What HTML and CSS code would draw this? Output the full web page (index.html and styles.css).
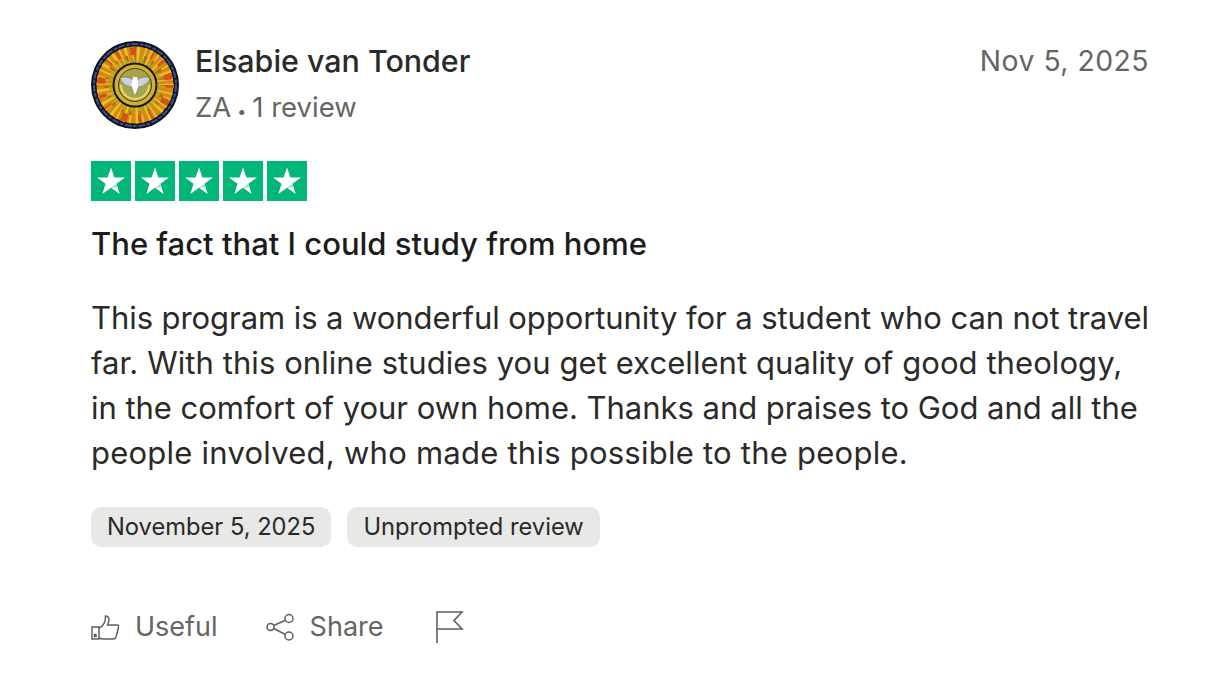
FILE: index.html
```html
<!DOCTYPE html>
<html lang="en">
<head>
<meta charset="utf-8">
<title>Review</title>
<link rel="stylesheet" href="styles.css">
</head>
<body>
<article class="review">
  <header class="head">
    <div class="who">
      <svg class="avatar" viewBox="0 0 88 88" aria-hidden="true">
        <circle cx="44" cy="44" r="44" fill="#10101c"/>
        <circle cx="44" cy="44" r="41" fill="none" stroke="#34508f" stroke-width="2.200" stroke-dasharray="7 1.500 4 1"/>
        <circle cx="44" cy="44" r="39.500" fill="#1c1410"/>
        <circle cx="44" cy="44" r="38.500" fill="#d28c12"/>
        <circle cx="44" cy="44" r="30" fill="none" stroke="#efbd24" stroke-width="17" stroke-dasharray="2.500 4 1.500 3"/>
        <circle cx="44" cy="44" r="34" fill="none" stroke="#d2521a" stroke-width="8" stroke-dasharray="3 11 6 16 2 9"/>
        <circle cx="44" cy="44" r="27" fill="none" stroke="#a9701a" stroke-width="7" stroke-dasharray="1.500 8 2.500 6"/>
        <circle cx="44" cy="44" r="24.500" fill="none" stroke="#a6ad2a" stroke-width="4" stroke-dasharray="3 5"/>
        <circle cx="44" cy="44" r="21.500" fill="#d3b02a" stroke="#15140f" stroke-width="2"/>
        <circle cx="44" cy="44" r="16.500" fill="#a7a54a" stroke="#1f2a1a" stroke-width=".8"/>
        <path d="M30 44a14 14 0 0 0 28 0" fill="none" stroke="#ecd968" stroke-width="2"/>
        <path d="M29 37c4.500-1.800 9-1 13 2l2 1 2-1c4-3 8.500-3.800 13-2-2 5.500-6.500 8.500-12 9l-1 5-2 3-2-3-1-5c-5.500-.5-10-3.500-12-9z" fill="#cfd0da" stroke="#6b6e7c" stroke-width=".6"/>
        <path d="M42 36h4l1.500 9-3.500 9-3.500-9z" fill="#fff"/>
      </svg>
      <div class="meta">
        <div class="name">Elsabie van Tonder</div>
        <div class="sub">ZA<span class="dot">•</span><span class="count">1 review</span></div>
      </div>
    </div>
    <time class="date">Nov 5, 2025</time>
  </header>

  <div class="stars" role="img" aria-label="5 stars">
    <span class="star"><svg viewBox="0 0 40 40"><path d="M20 6.500l3.400 10.100h10.600l-8.600 6.200 3.300 10.300-8.700-6.300-8.700 6.300 3.300-10.300-8.600-6.200h10.600z"/><path class="notch" d="M20 26.800l5.400-4 1.100 3.500z"/></svg></span>
    <span class="star"><svg viewBox="0 0 40 40"><path d="M20 6.500l3.400 10.100h10.600l-8.600 6.200 3.300 10.300-8.700-6.300-8.700 6.300 3.300-10.300-8.600-6.200h10.600z"/><path class="notch" d="M20 26.800l5.400-4 1.100 3.500z"/></svg></span>
    <span class="star"><svg viewBox="0 0 40 40"><path d="M20 6.500l3.400 10.100h10.600l-8.600 6.200 3.300 10.300-8.700-6.300-8.700 6.300 3.300-10.300-8.600-6.200h10.600z"/><path class="notch" d="M20 26.800l5.400-4 1.100 3.500z"/></svg></span>
    <span class="star"><svg viewBox="0 0 40 40"><path d="M20 6.500l3.400 10.100h10.600l-8.600 6.200 3.300 10.300-8.700-6.300-8.700 6.300 3.300-10.300-8.600-6.200h10.600z"/><path class="notch" d="M20 26.800l5.400-4 1.100 3.500z"/></svg></span>
    <span class="star"><svg viewBox="0 0 40 40"><path d="M20 6.500l3.400 10.100h10.600l-8.600 6.200 3.300 10.300-8.700-6.300-8.700 6.300 3.300-10.300-8.600-6.200h10.600z"/><path class="notch" d="M20 26.800l5.400-4 1.100 3.500z"/></svg></span>
  </div>

  <h2 class="title">The fact that I could study from home</h2>
  <p class="body"><span class="l1">This program is a wonderful opportunity for a student who can not travel</span><br><span class="l2">far. With this online studies you get excellent quality of good theology,</span><br><span class="l3">in the comfort of your own home. Thanks and praises to God and all the</span><br><span class="l4">people involved, who made this possible to the people.</span></p>

  <div class="tags">
    <span class="tag">November 5, 2025</span>
    <span class="tag">Unprompted review</span>
  </div>

  <footer class="actions">
    <span class="action">
      <svg class="icon" viewBox="0 0 28 28" fill="none" stroke="#5f5f5c" stroke-width="1.500" aria-hidden="true"><path d="M1 14h7v12H1z"/><path d="M8 15c3-1 5-4 6-7 .5-2 .5-4 .5-5 2 0 3.500 1.500 3.500 4 0 2-1 4-1.500 5H26c1.500 0 2 1 1.500 2.500l-2.500 9.500c-.5 1.500-1.500 2-3 2H12c-1.500 0-2.500-.5-4-1"/><path d="M3.500 21.500h1.500v2H3.500z"/></svg>
      <span>Useful</span>
    </span>
    <span class="action">
      <svg class="icon" viewBox="0 0 28 28" fill="none" stroke="#5f5f5c" stroke-width="1.500" aria-hidden="true"><circle cx="4.500" cy="14" r="3.500"/><circle cx="23" cy="5.500" r="4"/><circle cx="23" cy="23" r="4"/><path d="M7.800 12.500L19.300 7.200M7.800 15.500l11.500 6"/></svg>
      <span>Share</span>
    </span>
    <svg class="flag" viewBox="0 0 28 32" fill="none" stroke="#5f5f5c" stroke-width="1.600" aria-hidden="true"><path d="M1 32V1h25l-8 8.500 8 8.500H1"/></svg>
  </footer>
</article>
</body>
</html>
```

FILE: styles.css
```css
* { box-sizing: border-box; }
html, body { margin: 0; padding: 0; background: #fff; }
body { font-family: Inter, "Liberation Sans", sans-serif; color: #1c1c1c; }
.review { width: 1216px; height: 680px; padding: 41px 67px 0 91px; overflow: hidden; }
.head { display: flex; justify-content: space-between; align-items: flex-start; }
.who { display: flex; gap: 16px; align-items: flex-start; }
.avatar { width: 88px; height: 88px; display: block; }
.meta { display: flex; flex-direction: column; }
.name { font-size: 30.400px; line-height: 40px; font-weight: 500; color: #2a2a28; }
.sub { font-size: 27.500px; line-height: 36px; margin-top: 8px; color: #656561; }
.dot { font-size: 16px; margin: 0 6px; }
.date { font-size: 28.300px; line-height: 40px; color: #656561; letter-spacing: .5px; }
.stars { display: flex; gap: 4px; margin-top: 32px; }
.star { width: 40px; height: 40px; background: #00b67a; display: block; }
.star svg { display: block; width: 40px; height: 40px; fill: #fff; }
.star .notch { fill: #9fe0c8; }
.title { margin: 23px 0 0; font-size: 31px; line-height: 40px; font-weight: 500; color: #1c1c1c; }
.body { margin: 31px 0 0; font-size: 31px; line-height: 45px; color: #2a2a28; white-space: nowrap; }
.l1 { letter-spacing: -.07px; }
.l2 { letter-spacing: .07px; }
.l3 { letter-spacing: -.03px; }
.l4 { letter-spacing: .24px; }
.tags { display: flex; gap: 16px; margin-top: 32px; }
.tag { height: 40px; padding: 0 16px; border-radius: 10px; background: #e8e8e6; font-size: 23.700px; line-height: 40px; color: #2a2a28; }
.actions { display: flex; align-items: center; gap: 48px; margin-top: 63px; }
.action { display: flex; align-items: center; gap: 16px; font-size: 27px; color: #656561; }
.icon { width: 28px; height: 28px; display: block; }
.flag { width: 28px; height: 32px; display: block; margin-left: 4px; }
```
